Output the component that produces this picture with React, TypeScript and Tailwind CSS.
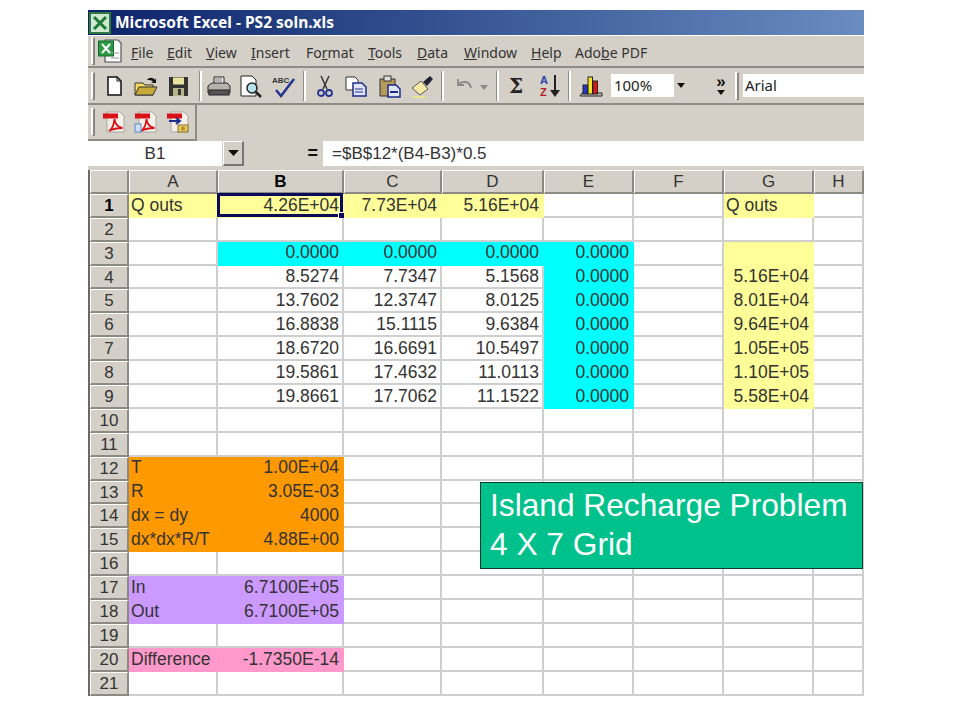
import React from 'react';

const ui = { fontFamily: '"Noto Sans", "Open Sans", sans-serif' };
const arial = { fontFamily: '"Liberation Sans", Arial, sans-serif' };

const Grip = () => (
  <div className="w-[4px] h-[28px] shrink-0 border-l-2 border-t border-white border-r-2 border-r-[#8a8780] border-b border-b-[#8a8780]" />
);
const Sep = ({ className = '' }: { className?: string }) => (
  <div className={`w-[3px] h-[30px] shrink-0 border-l border-[#8f8c85] border-r-2 border-r-white ${className}`} />
);

const Icon = ({ w = 24, h = 24, className = '', children }: { w?: number; h?: number; className?: string; children: React.ReactNode }) => (
  <svg width={w} height={h} viewBox={`0 0 ${w} ${h}`} className={`shrink-0 ${className}`}>{children}</svg>
);

const ExcelDoc = () => (
  <Icon w={26} h={26}>
    <path d="M8 2h13l3 3v19H8z" fill="#fff" stroke="#555" strokeWidth="1.2" />
    <rect x="1.5" y="3" width="15" height="15" fill="#2f9a45" stroke="#0b6a2c" />
    <path d="M5 6l8 9M13 6l-8 9" stroke="#fff" strokeWidth="2" />
    <path d="M14 20h8M14 15h8" stroke="#999" />
  </Icon>
);

const PdfIcon = ({ variant = 0 }: { variant?: number }) => (
  <Icon w={24} h={24}>
    <path d="M5 2h13l4 4v16H5z" fill="#f3efe8" stroke="#a9a6a0" />
    <rect x="1" y="3.5" width="15" height="5" fill="#d90f18" />
    {variant === 2 ? (
      <>
        <path d="M3 11h10M10 8l4 3-4 3" stroke="#1b2f8e" strokeWidth="2" fill="none" />
        <rect x="12" y="15" width="10" height="7" fill="#e6c860" stroke="#8a7526" />
        <circle cx="17" cy="18.5" r="2" fill="#b58a20" />
      </>
    ) : (
      <path d="M7 21c3-2 5-6 5.500-12 .5 5 3 8 8 9-4 0-9 .5-13.500 3z" fill="none" stroke="#d90f18" strokeWidth="1.800" />
    )}
    {variant === 1 && <rect x="1" y="14" width="6" height="8" fill="#cfe0f5" stroke="#5b88c8" />}
  </Icon>
);

const Header = ({ children, active, w }: { children?: React.ReactNode; active?: boolean; w?: string }) => (
  <div
    className={`${w ?? ''} flex items-center justify-center bg-[#d4d0c8] border-r-2 border-b-2 border-[#8d8a84] border-t border-l border-t-white border-l-white text-[#333] text-[17px] leading-none ${active ? 'font-bold text-black' : ''}`}
    style={arial}
  >
    {children}
  </div>
);

type CellDef = { t?: string; l?: boolean; bg?: string; line?: string };

const Y = { bg: 'bg-[#ffff99]', line: 'border-[#ffff99]' };
const C = { bg: 'bg-[#00ffff]', line: 'border-[#00ffff]' };
const O = { bg: 'bg-[#ff9900]', line: 'border-[#ff9900]' };
const P = { bg: 'bg-[#cc99ff]', line: 'border-[#cc99ff]' };
const K = { bg: 'bg-[#ff99cc]', line: 'border-[#ff99cc]' };

const col = (t: string, s?: { bg: string; line: string }, l?: boolean): CellDef => ({ t, l, ...s });
const none: CellDef = {};

// A to H for every row
const rows: CellDef[][] = [
  [col('Q outs', Y, true), col('4.26E+04', Y), col('7.73E+04', Y), col('5.16E+04', Y), none, none, col('Q outs', Y, true), none],
  [],
  [none, col('0.0000', C), col('0.0000', C), col('0.0000', C), col('0.0000', C), none, col('', Y), none],
  [none, col('8.5274'), col('7.7347'), col('5.1568'), col('0.0000', C), none, col('5.16E+04', Y), none],
  [none, col('13.7602'), col('12.3747'), col('8.0125'), col('0.0000', C), none, col('8.01E+04', Y), none],
  [none, col('16.8838'), col('15.1115'), col('9.6384'), col('0.0000', C), none, col('9.64E+04', Y), none],
  [none, col('18.6720'), col('16.6691'), col('10.5497'), col('0.0000', C), none, col('1.05E+05', Y), none],
  [none, col('19.5861'), col('17.4632'), col('11.0113'), col('0.0000', C), none, col('1.10E+05', Y), none],
  [none, col('19.8661'), col('17.7062'), col('11.1522'), col('0.0000', C), none, col('5.58E+04', Y), none],
  [],
  [],
  [col('T', O, true), col('1.00E+04', O)],
  [col('R', O, true), col('3.05E-03', O)],
  [col('dx = dy', O, true), col('4000', O)],
  [col('dx*dx*R/T', O, true), col('4.88E+00', O)],
  [],
  [col('In', P, true), col('6.7100E+05', P)],
  [col('Out', P, true), col('6.7100E+05', P)],
  [],
  [col('Difference', K, true), col('-1.7350E-14', K)],
  [],
];

const menus = [
  { k: 'F', r: 'ile', w: 36 },
  { k: 'E', r: 'dit', w: 39 },
  { k: 'V', r: 'iew', w: 45 },
  { k: 'I', r: 'nsert', w: 55 },
  { k: 'F', m: 'o', u: 'r', r: 'mat', w: 62 },
  { k: 'T', r: 'ools', w: 49 },
  { k: 'D', r: 'ata', w: 47 },
  { k: 'W', r: 'indow', w: 67 },
  { k: 'H', r: 'elp', w: 44 },
];

export default function App() {
  return (
    <div className="relative min-h-[720px] bg-white pl-[88px] pt-[10px]">
      <div className="w-[776px] overflow-hidden bg-[#d4d0c8]">
        {/* Title bar */}
        <div className="h-[25px] flex items-center gap-[4px] pl-[1px] bg-gradient-to-r from-[#0d2369] to-[#6a8cc0] text-white text-[15.5px] font-bold" style={ui}>
          <svg width="22" height="22" viewBox="0 0 22 22" className="shrink-0">
            <rect x="1" y="1" width="20" height="20" fill="#cfe8cf" stroke="#2c7a3f" strokeWidth="2" />
            <path d="M5 5l12 12M17 5L5 17" stroke="#1f7a38" strokeWidth="3" />
          </svg>
          <span>Microsoft Excel - PS2 soln.xls</span>
        </div>
        <div className="h-[1px] bg-white" />

        {/* Menu bar */}
        <div className="h-[32px] flex items-center pl-[3px] border-b-2 border-[#8f8c85] text-[14px] text-[#333]" style={ui}>
          <Grip />
          <div className="ml-[2px] mr-[8px]"><ExcelDoc /></div>
          <div className="flex pt-[3px]">
            {menus.map((m) => (
              <span key={m.r} style={{ width: m.w }}>
                {m.m ? <>{m.k}{m.m}<u>{m.u}</u>{m.r}</> : <><u>{m.k}</u>{m.r}</>}
              </span>
            ))}
            <span>Ado<u>b</u>e PDF</span>
          </div>
        </div>

        {/* Standard toolbar */}
        <div className="h-[37px] flex items-center pl-[3px] border-b-2 border-[#8f8c85]">
          <Grip />
          <Icon className="ml-[9px]" w={20}><path d="M4 3h9l4 4v14H4z" fill="#fff" stroke="#111" strokeWidth="1.500" /><path d="M13 3v4h4" fill="none" stroke="#111" /></Icon>
          <Icon className="ml-[10px]" w={24}><path d="M1 9h8l2 2h8v10H1z" fill="#f5d75f" stroke="#333" /><path d="M1 21l4-8h18l-4 8z" fill="#c9a93a" stroke="#333" /><path d="M13 6c2-3 6-3 8 0l1-2v5h-5l2-1c-1-2-4-2-6-2z" fill="#111" /></Icon>
          <Icon className="ml-[10px]" w={22}><path d="M1 3h19v19H1z" fill="#333" /><rect x="5" y="3.500" width="11" height="7" fill="#e9e3a0" /><rect x="5" y="14" width="11" height="8" fill="#b9b38a" /><rect x="10" y="15" width="3" height="6" fill="#333" /></Icon>
          <Sep className="ml-[9px]" />
          <Icon className="ml-[5px]" w={24}><path d="M7 3h10v7H7z" fill="#fff" stroke="#222" /><path d="M1 12l4-3h15l3 3v7H1z" fill="#b5b2ab" stroke="#222" /><rect x="2" y="16" width="20" height="5" fill="#555" stroke="#222" /><path d="M8 5h7M8 7h7" stroke="#666" /></Icon>
          <Icon className="ml-[8px]" w={24}><path d="M2 2h11l4 4v16H2z" fill="#fff" stroke="#222" /><circle cx="13" cy="14" r="5" fill="#b8e4f0" stroke="#222" strokeWidth="1.500" /><path d="M17 18l5 5" stroke="#222" strokeWidth="2.500" /></Icon>
          <Icon className="ml-[8px]" w={24}><path d="M5 16l5 6L23 5" fill="none" stroke="#24338f" strokeWidth="2.500" /><text x="1" y="9" fontSize="8" fontWeight="700" fill="#333" style={arial}>ABC</text></Icon>
          <Sep className="ml-[8px]" />
          <Icon className="ml-[10px]" w={18}><path d="M5 2l6 13M13 2L7 15" stroke="#333" strokeWidth="1.500" /><circle cx="5" cy="19" r="3" fill="none" stroke="#24338f" strokeWidth="1.800" /><circle cx="13" cy="19" r="3" fill="none" stroke="#24338f" strokeWidth="1.800" /></Icon>
          <Icon className="ml-[10px]" w={24}><path d="M2 3h9l3 3v10H2z" fill="#fff" stroke="#333" /><path d="M9 9h9l4 4v9H9z" fill="#dfe6fa" stroke="#1c2a8a" strokeWidth="1.500" /><path d="M11 15h8M11 18h8" stroke="#1c2a8a" /></Icon>
          <Icon className="ml-[10px]" w={24}><path d="M2 5h15v17H2z" fill="#b59a5a" stroke="#333" /><rect x="6" y="2" width="7" height="5" fill="#ddd" stroke="#333" /><path d="M10 11h8l4 4v8H10z" fill="#dfe6fa" stroke="#1c2a8a" strokeWidth="1.500" /><path d="M12 18h8" stroke="#1c2a8a" strokeWidth="2" /></Icon>
          <Icon className="ml-[8px]" w={24}><path d="M2 14l9-7 7 8-8 6z" fill="#f6e9a6" stroke="#555" /><path d="M13 8l7-6 3 3-6 7z" fill="#223" /><path d="M3 23h12" stroke="#f4ef7a" strokeWidth="1.500" /></Icon>
          <Sep className="ml-[7px]" />
          <Icon className="ml-[9px]" w={22}><path d="M5 5v6h6M5 11c4-5 12-4 13 3" fill="none" stroke="#8b8985" strokeWidth="1.800" /></Icon>
          <svg width="8" height="5" viewBox="0 0 8 5" className="ml-[5px] mt-[3px] shrink-0"><path d="M0 0h8L4 5z" fill="#8b8985" /></svg>
          <Sep className="ml-[8px]" />
          <span className="ml-[10px] w-[18px] text-[20px] leading-none font-bold text-[#222]" style={{ fontFamily: '"DejaVu Serif", serif' }}>Σ</span>
          <div className="ml-[13px] flex items-center shrink-0">
            <div className="flex flex-col text-[11px] leading-[12px] font-bold" style={arial}>
              <span className="text-[#2a3fae]">A</span>
              <span className="text-[#b3201f]">Z</span>
            </div>
            <svg width="10" height="24" viewBox="0 0 10 24" className="ml-[2px]"><path d="M5 1v17" stroke="#222" strokeWidth="2" /><path d="M0 16h10l-5 7z" fill="#222" /></svg>
          </div>
          <Sep className="ml-[8px]" />
          <Icon className="ml-[8px]" w={24}><path d="M1 22L3 19h20v3z" fill="#c5c2b8" stroke="#222" /><rect x="4" y="11" width="4.500" height="9" fill="#2336c8" stroke="#222" /><rect x="9" y="3" width="4.500" height="17" fill="#f2e52a" stroke="#222" /><rect x="14" y="7" width="4.500" height="13" fill="#d8191c" stroke="#222" /></Icon>
          <div className="ml-[8px] w-[78px] h-[23px] shrink-0 bg-white flex items-center justify-between pl-[3px] text-[15px] text-[#222]" style={ui}>
            <span>100%</span>
            <div className="w-[15px] h-full bg-[#d4d0c8] flex items-center justify-center">
              <svg width="8" height="5" viewBox="0 0 8 5"><path d="M0 0h8L4 5z" fill="#111" /></svg>
            </div>
          </div>
          <div className="ml-[27px] w-[10px] shrink-0 flex flex-col items-center gap-[3px]">
            <span className="text-[17px] leading-[10px] font-bold text-[#111]" style={arial}>»</span>
            <svg width="8" height="5" viewBox="0 0 8 5"><path d="M0 0h8L4 5z" fill="#111" /></svg>
          </div>
          <div className="ml-[9px]"><Grip /></div>
          <div className="ml-[4px] flex-1 h-[23px] bg-white flex items-center pl-[2px] text-[15px] text-[#222]" style={ui}>Arial</div>
        </div>

        {/* Adobe toolbar */}
        <div className="h-[36px] flex">
          <div className="w-[109px] flex items-center pl-[3px] border-r-2 border-b-2 border-[#8f8c85]">
            <Grip />
            <div className="ml-[7px] flex gap-[8px]">
              <PdfIcon />
              <PdfIcon variant={1} />
              <PdfIcon variant={2} />
            </div>
          </div>
        </div>

        {/* Formula bar */}
        <div className="h-[25px] flex items-stretch text-[17px] text-[#333]" style={arial}>
          <div className="w-[134px] bg-white flex items-center justify-center">B1</div>
          <div className="w-[21px] ml-[1px] border-t border-l border-white border-r-2 border-b-2 border-r-[#777] border-b-[#777] flex items-center justify-center">
            <svg width="11" height="6" viewBox="0 0 11 6"><path d="M0 0h11L5.500 6z" fill="#111" /></svg>
          </div>
          <div className="w-[79px] flex items-center justify-end pr-[5px] font-bold text-[18px] text-[#111]">=</div>
          <div className="flex-1 bg-white flex items-center pl-[9px]">=$B$12*(B4-B3)*0.5</div>
        </div>

        {/* Sheet */}
        <div className="mt-[4px] border-l-2 border-[#6c6a66] bg-white grid grid-cols-[39px_89px_126px_98px_102px_90px_90px_90px_50px] auto-rows-[23.9px]" style={arial}>
          <Header />
          {['A', 'B', 'C', 'D', 'E', 'F', 'G', 'H'].map((c) => (
            <Header key={c} active={c === 'B'}>{c}</Header>
          ))}
          {rows.map((cells, r) => (
            <React.Fragment key={r}>
              <Header active={r === 0}>{r + 1}</Header>
              {Array.from({ length: 8 }).map((_, i) => {
                const c = cells[i] ?? none;
                return (
                  <div
                    key={i}
                    className={`relative flex items-center pl-[2px] pr-[3px] pt-[1px] text-[17.500px] leading-none whitespace-nowrap text-[#333] border-r-2 border-b-2 ${c.line ?? 'border-[#cfcfcf]'} ${c.bg ?? 'bg-white'} ${c.l ? 'justify-start' : 'justify-end'}`}
                  >
                    {c.t}
                    {r === 0 && i === 1 && (
                      <div className="absolute -left-[1px] -top-[1px] -right-[1px] -bottom-[1px] border-[3px] border-[#0a0a5c]">
                        <div className="absolute -right-[5px] -bottom-[5px] w-[7px] h-[7px] bg-[#0a0a5c] border border-white" />
                      </div>
                    )}
                  </div>
                );
              })}
            </React.Fragment>
          ))}
        </div>
      </div>

      {/* Slide callout */}
      <div className="absolute left-[480px] top-[482px] w-[383px] h-[87px] bg-[#00c18c] border border-[#0b3d2e] pl-[9px] pt-[3px] text-white text-[31.700px] leading-[39px]" style={arial}>
        <div>Island Recharge Problem</div>
        <div>4 X 7 Grid</div>
      </div>
    </div>
  );
}
